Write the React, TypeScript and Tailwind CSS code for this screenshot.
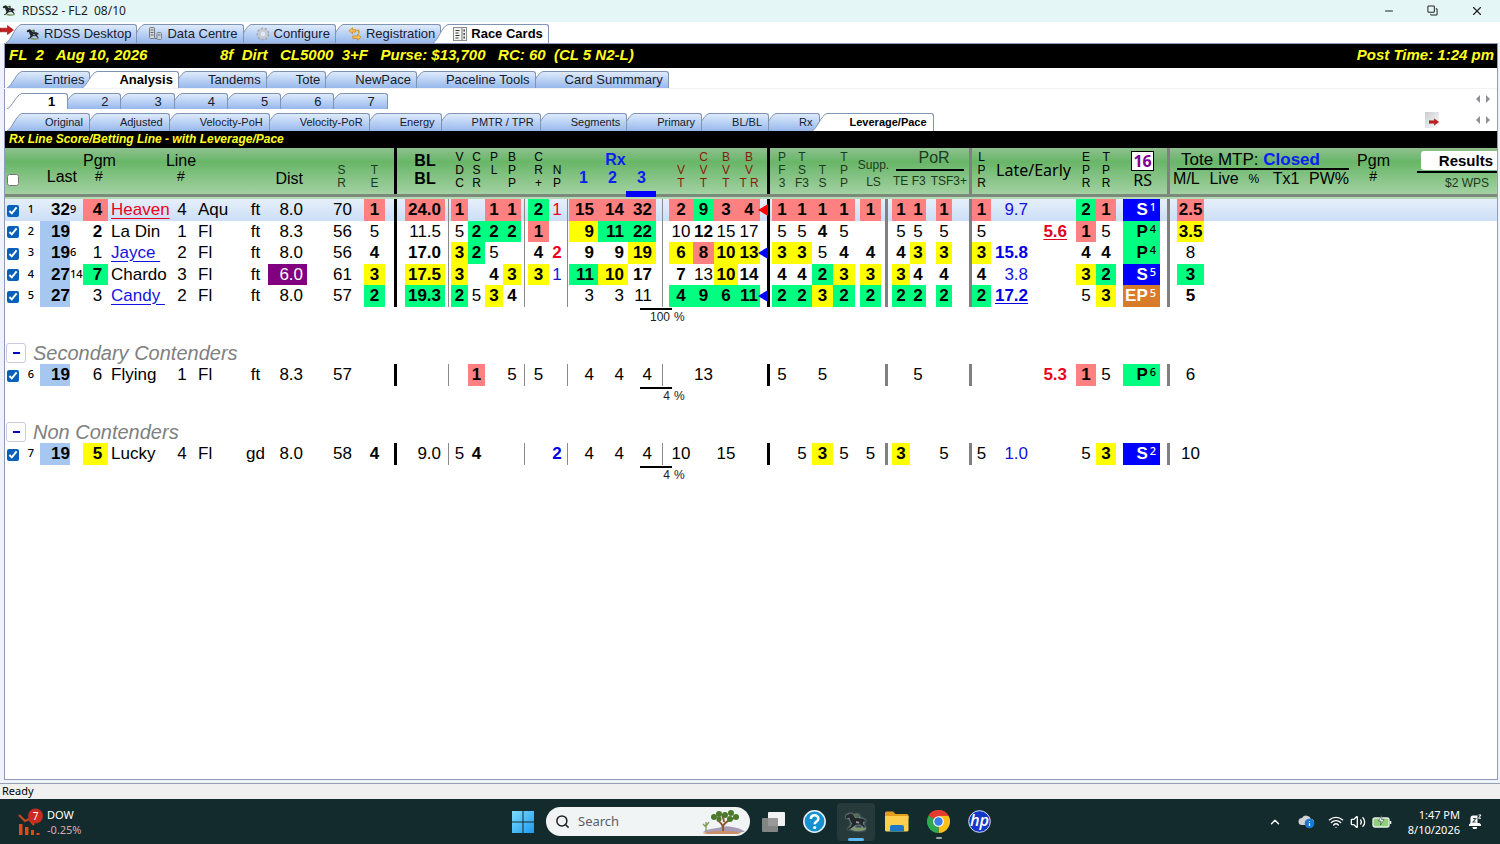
import React from "react";
import { clsx } from "clsx";
import {
  ChevronUp,
  Copy,
  Minus,
  Search,
  Volume2,
  Wifi,
  X,
} from "lucide-react";

type ColKind = "text" | "thin" | "mid" | "thick" | "arrow" | "gap";

interface Column {
  id: string;
  width: number;
  kind: ColKind;
  className?: string;
}

const col = (id: string, width: number, className = "text-center"): Column => ({ id, width, kind: "text", className });
const rule = (kind: ColKind, width: number, id: string): Column => ({ id, width, kind });

const COLUMNS: Column[] = [
  col("check", 17),
  col("idx", 18),
  col("last", 30, "text-right"),
  col("sup", 13),
  col("pgm", 25, "text-center pl-1"),
  col("name", 66, "pl-[3px]"),
  col("line", 16),
  col("track", 53, "pl-2"),
  col("surf", 25),
  col("dist", 39, "text-right pr-1"),
  col("sr", 57, "text-right pr-3"),
  col("te", 21),
  rule("thick", 20, "r1"),
  col("bl", 40, "text-right pr-1"),
  rule("thin", 6, "r2"),
  col("vdc", 17),
  col("csr", 17),
  col("pl", 18),
  col("bpp", 18),
  rule("thin", 7, "r3"),
  col("cr", 21),
  col("np", 16),
  rule("thin", 4, "r4"),
  col("rx1", 29, "text-right pr-1"),
  col("rx2", 30, "text-right pr-1"),
  col("rx3", 28, "text-right pr-1"),
  rule("thin", 13, "r5"),
  col("vt", 24),
  col("cvt", 21),
  col("bvt", 24),
  col("bvtr", 22),
  rule("arrow", 5, "arrow"),
  rule("thick", 7, "r6"),
  col("pf3", 20),
  col("tsf3", 20),
  col("ts", 21),
  col("tpp", 22),
  rule("gap", 5, "g1"),
  col("ls", 21),
  rule("mid", 11, "r7"),
  col("porTe", 18),
  col("porF3", 16),
  rule("gap", 10, "g2"),
  col("porTs", 16),
  rule("gap", 16, "g3"),
  rule("mid", 4, "r8"),
  col("lpr", 19),
  col("late", 39, "text-right pr-[2px]"),
  col("early", 40, "text-right pr-[3px]"),
  rule("gap", 6, "g4"),
  col("epr", 20),
  col("tpr", 20),
  rule("gap", 7, "g5"),
  col("rs", 37, "text-right pr-1"),
  rule("mid", 17, "r9"),
  col("ml", 27),
];

const RULES: Record<string, string> = {
  thin: "bg-[linear-gradient(#8a8a8a,#8a8a8a)] bg-[length:1px_100%] bg-center bg-no-repeat",
  mid: "bg-[linear-gradient(#808080,#808080)] bg-[length:3px_100%] bg-center bg-no-repeat",
  thick: "bg-[linear-gradient(#000,#000)] bg-[length:3px_100%] bg-center bg-no-repeat",
};

// First word of a cell value picks the tone, the second is the value itself.
const TONES: Record<string, string> = {
  r: "bg-[#ff8080] font-bold",
  y: "bg-[#ffff00] font-bold",
  g: "bg-[#00ff80] font-bold",
  b: "font-bold",
  purple: "bg-[#800080] text-white",
  red: "text-[#f00020]",
  redB: "text-[#f00020] font-bold",
  redU: "text-[#e00020] font-bold underline underline-offset-2",
  blue: "text-[#1414e0]",
  blueB: "text-[#0000e6] font-bold",
  blueU: "text-[#0000e6] font-bold underline underline-offset-2",
};

const RS_TONES: Record<string, string> = {
  S: "bg-[#0000ff] text-white",
  P: "bg-[#00ff80] text-black",
  EP: "bg-[#d87c2c] text-white",
};

type Row = Record<string, string>;

const CONTENDERS: Row[] = [
  {
    idx: "1", last: "32", sup: "9", pgm: "r 4", name: "red Heaven", line: "4", track: "Aqu", surf: "ft", dist: "8.0", sr: "70", te: "r 1",
    bl: "r 24.0", vdc: "r 1", pl: "r 1", bpp: "r 1", cr: "g 2", np: "red 1", rx1: "r 15", rx2: "r 14", rx3: "r 32",
    vt: "r 2", cvt: "g 9", bvt: "r 3", bvtr: "r 4", arrow: "#ff0000", pf3: "r 1", tsf3: "r 1", ts: "r 1", tpp: "r 1", ls: "r 1",
    porTe: "r 1", porF3: "r 1", porTs: "r 1", lpr: "r 1", late: "blue 9.7", epr: "g 2", tpr: "r 1", rs: "S 1", ml: "r 2.5",
  },
  {
    idx: "2", last: "19", pgm: "b 2", name: "La Din", line: "1", track: "Fl", surf: "ft", dist: "8.3", sr: "56", te: "5",
    bl: "11.5", vdc: "5", csr: "g 2", pl: "g 2", bpp: "g 2", cr: "r 1", rx1: "y 9", rx2: "g 11", rx3: "g 22",
    vt: "10", cvt: "b 12", bvt: "15", bvtr: "17", pf3: "5", tsf3: "5", ts: "b 4", tpp: "5",
    porTe: "5", porF3: "5", porTs: "5", lpr: "5", early: "redU 5.6", epr: "r 1", tpr: "5", rs: "P 4", ml: "y 3.5",
  },
  {
    idx: "3", last: "19", sup: "6", pgm: "1", name: "blue Jayce", line: "2", track: "Fl", surf: "ft", dist: "8.0", sr: "56", te: "b 4",
    bl: "b 17.0", vdc: "y 3", csr: "g 2", pl: "5", cr: "b 4", np: "redB 2", rx1: "b 9", rx2: "b 9", rx3: "y 19",
    vt: "y 6", cvt: "r 8", bvt: "y 10", bvtr: "y 13", arrow: "#0000ff", pf3: "y 3", tsf3: "y 3", ts: "5", tpp: "b 4", ls: "b 4",
    porTe: "b 4", porF3: "y 3", porTs: "y 3", lpr: "y 3", late: "blueB 15.8", epr: "b 4", tpr: "b 4", rs: "P 4", ml: "8",
  },
  {
    idx: "4", last: "27", sup: "14", pgm: "g 7", name: "Chardo", line: "3", track: "Fl", surf: "ft", dist: "purple 6.0", sr: "61", te: "y 3",
    bl: "y 17.5", vdc: "y 3", pl: "b 4", bpp: "y 3", cr: "y 3", np: "blue 1", rx1: "g 11", rx2: "y 10", rx3: "b 17",
    vt: "b 7", cvt: "13", bvt: "y 10", bvtr: "b 14", pf3: "b 4", tsf3: "b 4", ts: "g 2", tpp: "y 3", ls: "y 3",
    porTe: "y 3", porF3: "b 4", porTs: "b 4", lpr: "b 4", late: "blue 3.8", epr: "y 3", tpr: "g 2", rs: "S 5", ml: "g 3",
  },
  {
    idx: "5", last: "27", pgm: "3", name: "blue Candy", line: "2", track: "Fl", surf: "ft", dist: "8.0", sr: "57", te: "g 2",
    bl: "g 19.3", vdc: "g 2", csr: "5", pl: "y 3", bpp: "b 4", rx1: "3", rx2: "3", rx3: "11",
    vt: "g 4", cvt: "g 9", bvt: "g 6", bvtr: "g 11", arrow: "#0000ff", pf3: "g 2", tsf3: "g 2", ts: "y 3", tpp: "g 2", ls: "g 2",
    porTe: "g 2", porF3: "g 2", porTs: "g 2", lpr: "g 2", late: "blueU 17.2", epr: "5", tpr: "y 3", rs: "EP 5", ml: "b 5",
  },
];

const SECONDARY: Row[] = [
  {
    idx: "6", last: "19", pgm: "6", name: "Flying", line: "1", track: "Fl", surf: "ft", dist: "8.3", sr: "57", csr: "r 1", bpp: "5", cr: "5",
    rx1: "4", rx2: "4", rx3: "4", cvt: "13", pf3: "5", ts: "5", porF3: "5", early: "redB 5.3", epr: "r 1", tpr: "5", rs: "P 6", ml: "6",
  },
];

const NON_CONTENDERS: Row[] = [
  {
    idx: "7", last: "19", pgm: "y 5", name: "Lucky", line: "4", track: "Fl", surf: "gd", dist: "8.0", sr: "58", te: "b 4", bl: "9.0",
    vdc: "5", csr: "b 4", np: "blueB 2", rx1: "4", rx2: "4", rx3: "4", vt: "10", bvt: "15", tsf3: "5", ts: "y 3", tpp: "5", ls: "5",
    porTe: "y 3", porTs: "5", lpr: "5", late: "blue 1.0", epr: "5", tpr: "y 3", rs: "S 2", ml: "10",
  },
];

function parseCell(raw: string) {
  const cut = raw.indexOf(" ");
  const tone = cut > 0 ? TONES[raw.slice(0, cut)] : undefined;
  return tone ? { tone, value: raw.slice(cut + 1) } : { tone: "", value: raw };
}

/* ---------- drawings ---------- */

function HorseIcon({ className }: { className?: string }) {
  return (
    <svg viewBox="0 0 16 14" className={className} aria-hidden="true">
      <path d="M1 2.5 4 1l2 .8L7.5 4l3.8.3c1.2 0 2 .5 2.6 1.2L15.5 7l-2-.5-.8 1.7 1.6 2-.4 1.6-1-.2.3-1.2-2.4-1.6-3.2.3L5.4 11 2.6 12.5l-.4-.8 2-1.4.9-2L4 6 3.4 4 1 4.3z" fill="#23282c" />
      <path d="M6.6 2.2 9 1.4l1.4 1-.4 1.800-2.200-.2z" fill="#4d6b4a" />
      <path d="M6 10.500c2.500 1 5 1 8 .4l1 1c-3 1.500-8 1.300-10.500.2z" fill="#7d9a63" />
      <path d="m8 6.500 2.500.5-.5 1-2-.3z" fill="#9aa3ab" />
    </svg>
  );
}

function DataIcon() {
  return (
    <svg viewBox="0 0 14 14" className="h-[14px] w-[14px]" aria-hidden="true">
      <rect x=".5" y=".5" width="5" height="11" rx="1" fill="#d5d7d9" stroke="#77797c" />
      <path d="M1.500 3h3M1.500 5.500h3M1.500 8h3" stroke="#66696c" />
      <rect x="8" y="5.500" width="4.500" height="7" rx="1" fill="#c6cfda" stroke="#7e8894" />
      <path d="M5.500 11.500H8M9 8h2.500" stroke="#6a737d" />
    </svg>
  );
}

function GearIcon() {
  return (
    <svg viewBox="0 0 14 14" className="h-[14px] w-[14px]" aria-hidden="true">
      <circle cx="7" cy="7" r="5.300" fill="none" stroke="#a5a8ac" strokeWidth="2.200" strokeDasharray="2.300 1.400" />
      <circle cx="7" cy="7" r="3.700" fill="none" stroke="#c9cbd0" strokeWidth="2.400" />
      <circle cx="7" cy="7" r="2.200" fill="#dfeafa" />
    </svg>
  );
}

function SwapIcon() {
  return (
    <svg viewBox="0 0 14 14" className="h-[14px] w-[14px]" aria-hidden="true">
      <path d="M4.500.8 1 3.800l3.500 3V5h3.200V2.600H4.500z" fill="#f6c35a" stroke="#c98a1c" strokeWidth=".8" />
      <path d="m9.500 13.200 3.600-3-3.600-3V9H4.800v2.500h4.700z" fill="#f6c35a" stroke="#c98a1c" strokeWidth=".8" />
      <path d="M8.500 3.500h2.300v3.200" fill="none" stroke="#d79a2c" strokeWidth="1.400" />
    </svg>
  );
}

function CardIcon() {
  return (
    <svg viewBox="0 0 14 14" className="h-[14px] w-[14px]" aria-hidden="true">
      <rect x=".5" y=".5" width="13" height="13" fill="#f4f4f0" stroke="#8a8d90" />
      <path d="M2.500 3.500h4M2.500 6h3M2.500 8.500h4M2.500 11h3" stroke="#33373a" strokeWidth="1.200" />
      <path d="M9 1v12" stroke="#77797c" />
      <path d="M11.200 2.500v2M11.200 6v2M11.200 9.500v2" stroke="#4d5053" strokeWidth="1.600" />
    </svg>
  );
}

function RedArrow({ className }: { className?: string }) {
  return (
    <svg viewBox="0 0 14 10" className={className} aria-hidden="true">
      <path d="M0 3.200h7.500V.5L13.500 5l-6 4.500V6.800H0z" fill="#c61d1d" stroke="#8e1010" strokeWidth=".6" />
    </svg>
  );
}

/* ---------- tabs ---------- */

interface TabItem {
  label: string;
  icon?: React.ReactNode;
}

interface TabStripProps {
  name: string;
  items: TabItem[];
  initial: number;
  className: string;
  tabClass: string;
  labelClass: string;
  children?: React.ReactNode;
}

function TabStrip({ name, items, initial, className, tabClass, labelClass, children }: TabStripProps) {
  const [active, setActive] = React.useState(initial);

  return (
    <div className={clsx("isolate flex items-end", className)}>
      <div role="tablist" aria-label={name} className="flex pl-2">
        {items.map((item, i) => {
          const on = i === active;
          return (
            <button
              key={item.label}
              type="button"
              role="tab"
              aria-selected={on}
              onClick={() => setActive(i)}
              className={clsx("relative -ml-2 flex whitespace-nowrap text-[#16202c] first:ml-0", tabClass)}
              style={{ zIndex: on ? 40 : 20 - i }}
            >
              <svg viewBox="0 0 18 18" preserveAspectRatio="none" className="h-full w-[18px] shrink-0" aria-hidden="true">
                <path d="M0 18C5 16 9 2 15 .5H18V18z" fill={on ? "#fff" : "url(#tab-fill)"} />
                <path d="M0 18C5 16 9 2 15 .5H18" fill="none" stroke="#7f93b2" vectorEffect="non-scaling-stroke" />
              </svg>
              <span
                className={clsx(
                  "flex h-full items-center gap-1 rounded-tr-[3px] border-t border-r border-[#7f93b2]",
                  on ? "bg-white font-bold text-black" : "bg-linear-to-b from-[#dfebfc] to-[#97b8ec]",
                  labelClass,
                )}
              >
                {item.icon}
                {item.label}
              </span>
            </button>
          );
        })}
      </div>
      {children}
    </div>
  );
}

function Pager({ name }: { name: string }) {
  return (
    <div className="flex items-center gap-1 pr-[6px]">
      <button type="button" aria-label={`Previous ${name}`}>
        <svg viewBox="0 0 6 8" className="h-2 w-[6px]"><path d="M5 0v8L1 4z" fill="#8d9096" /></svg>
      </button>
      <button type="button" aria-label={`Next ${name}`}>
        <svg viewBox="0 0 6 8" className="h-2 w-[6px]"><path d="M1 0v8l4-4z" fill="#8d9096" /></svg>
      </button>
    </div>
  );
}

/* ---------- table ---------- */

function Stack({ lines, className }: { lines: [string, string, string]; className?: string }) {
  return (
    <div className={clsx("pt-[3px] text-center text-xs leading-[13px]", className)}>
      {lines.map((line, i) => (
        <div key={i}>{line || "\u00a0"}</div>
      ))}
    </div>
  );
}

function HeaderRow() {
  return (
    <tr className="h-[46px] bg-linear-to-b from-[#8ebf8e] via-[#68b668] via-30% to-[#a3d1a3] align-top whitespace-nowrap *:p-0 *:font-normal">
      <th>
        <input type="checkbox" aria-label="Select all horses" className="mt-[26px] ml-[2px] block h-3 w-3" />
      </th>
      <th colSpan={3} className="text-right">
        <div className="pt-5 pr-[6px] leading-[18px]">Last</div>
      </th>
      <th colSpan={4}>
        <div className="flex gap-[50px] pt-1">
          <div className="w-8 text-center leading-[18px]">
            Pgm
            <div className="text-sm leading-3">#</div>
          </div>
          <div className="w-8 text-center leading-[18px]">
            Line
            <div className="text-sm leading-3">#</div>
          </div>
        </div>
      </th>
      <th colSpan={2} className="text-right">
        <div className="pt-[22px] pr-1 leading-[18px]">Dist</div>
      </th>
      <th><Stack lines={["", "S", "R"]} className="pl-3 text-[#1c3a1c]" /></th>
      <th><Stack lines={["", "T", "E"]} className="text-[#1c3a1c]" /></th>
      <th className={RULES.thick} />
      <th>
        <div className="pt-1 text-center font-bold leading-[18px]">BL<br />BL</div>
      </th>
      <th />
      <th><Stack lines={["V", "D", "C"]} /></th>
      <th><Stack lines={["C", "S", "R"]} /></th>
      <th><Stack lines={["P", "L", ""]} /></th>
      <th><Stack lines={["B", "P", "P"]} /></th>
      <th />
      <th><Stack lines={["C", "R", "+"]} /></th>
      <th><Stack lines={["", "N", "P"]} /></th>
      <th />
      <th colSpan={3} className="relative text-[#0a20f0]">
        <div className="pt-[2px] pl-[6px] text-center font-bold leading-[19px]">Rx</div>
        <div className="grid grid-cols-3 text-center font-bold leading-[18px]">
          <span>1</span>
          <span>2</span>
          <span>3</span>
        </div>
        <div className="absolute right-0 -bottom-[3px] h-[6px] w-[30px] bg-[#0000ff]" />
      </th>
      <th />
      <th><Stack lines={["", "V", "T"]} className="text-[#8b1a0a]" /></th>
      <th><Stack lines={["C", "V", "T"]} className="text-[#8b1a0a]" /></th>
      <th><Stack lines={["B", "V", "T"]} className="text-[#8b1a0a]" /></th>
      <th><Stack lines={["B", "V", "T R"]} className="text-[#8b1a0a]" /></th>
      <th />
      <th className={RULES.thick} />
      <th><Stack lines={["P", "F", "3"]} className="text-[#1c3a1c]" /></th>
      <th><Stack lines={["T", "S", "F3"]} className="text-[#1c3a1c]" /></th>
      <th><Stack lines={["", "T", "S"]} className="text-[#1c3a1c]" /></th>
      <th><Stack lines={["T", "P", "P"]} className="text-[#1c3a1c]" /></th>
      <th colSpan={3}>
        <div className="pt-[10px] text-center text-xs leading-[14px] text-[#1c3a1c]">
          Supp.
          <div className="leading-5">LS</div>
        </div>
      </th>
      <th colSpan={5}>
        <div className="px-1 text-[#1c3a1c]">
          <div className="border-b-2 border-black pt-px pb-[2px] pl-2 text-center text-base leading-[18px]">PoR</div>
          <div className="-mx-[3px] flex justify-between text-xs leading-5">
            <span>TE F3</span>
            <span>TSF3+</span>
          </div>
        </div>
      </th>
      <th className={RULES.mid} />
      <th><Stack lines={["L", "P", "R"]} /></th>
      <th colSpan={3}>
        <div className="pt-[13px] text-center font-['Noto_Sans',sans-serif] text-base leading-[18px]">Late/Early</div>
      </th>
      <th><Stack lines={["E", "P", "R"]} /></th>
      <th><Stack lines={["T", "P", "R"]} /></th>
      <th />
      <th>
        <div className="flex flex-col items-center pt-[3px] pl-[2px] font-['Noto_Sans',sans-serif]">
          <span className="border border-black bg-white px-px text-base font-bold leading-[18px] text-[#800090]">16</span>
          <span className="text-base leading-[19px]">RS</span>
        </div>
      </th>
      <th className={RULES.mid} />
      <th colSpan={2}>
        <div className="-ml-1 flex items-start pt-[3px] text-left">
          <div className="text-[17px]">
            <div className="ml-1 border-b-2 border-black pl-1 leading-[17px]">
              Tote MTP: <b className="text-[#0a20f0]">Closed</b>
            </div>
            <div className="flex w-[176px] items-center justify-between text-base leading-[18px]">
              <span>M/L</span>
              <span>Live</span>
              <span className="text-xs">%</span>
              <span className="pl-1">Tx1</span>
              <span>PW%</span>
            </div>
          </div>
          <div className="ml-2 w-8 pt-px text-center leading-[18px]">
            Pgm
            <div className="text-sm leading-3">#</div>
          </div>
          <div className="ml-auto">
            <div className="border-b-2 border-black pb-px pl-1">
              <button type="button" className="block w-[76px] rounded-l-[3px] bg-white pr-1 text-right text-[15px] font-bold leading-[19px]">
                Results
              </button>
            </div>
            <div className="pr-2 text-right text-xs leading-5 text-[#1c3a1c]">$2 WPS</div>
          </div>
        </div>
      </th>
    </tr>
  );
}

function HorseCell({ column, row }: { column: Column; row: Row }) {
  const raw = row[column.id] ?? "";

  if (column.kind === "arrow") {
    return (
      <td className="relative p-0">
        {raw ? (
          <svg viewBox="0 0 10 12" className="absolute top-[5px] -left-[2px] h-3 w-[10px]" aria-hidden="true">
            <path d="M10 0v12L0 6z" fill={raw} />
          </svg>
        ) : null}
      </td>
    );
  }
  if (column.kind !== "text") return <td className={clsx("p-0", RULES[column.kind])} />;

  if (column.id === "check") {
    return (
      <td className="p-0">
        <input
          type="checkbox"
          defaultChecked
          aria-label={`Include horse ${row.idx}`}
          className="mt-px ml-[2px] block h-3 w-3 accent-[#0860b8]"
        />
      </td>
    );
  }
  if (column.id === "idx" || column.id === "sup") {
    return (
      <td
        className={clsx(
          "p-0 align-top font-['Noto_Sans',sans-serif] text-[11px] font-medium leading-[19px]",
          column.id === "idx" && "text-center",
        )}
      >
        {raw}
      </td>
    );
  }
  if (column.id === "last") {
    return <td className={clsx("p-0 text-right font-bold", row.idx !== "1" && "bg-[#a6c8f0]")}>{raw}</td>;
  }
  if (column.id === "rs") {
    const [style, points] = raw.split(" ");
    return (
      <td className={clsx("p-0 pr-1 text-right font-bold", RS_TONES[style])}>
        {style}
        <span className="relative -top-1 pl-[2px] font-['Noto_Sans',sans-serif] text-[11px] font-medium leading-none">{points}</span>
      </td>
    );
  }

  const { tone, value } = parseCell(raw);
  if (column.id === "name" && tone) {
    return (
      <td className="p-0 pl-[3px]">
        <a href="#" className={clsx("whitespace-pre underline underline-offset-3", tone)}>
          {value.padEnd(6)}
        </a>
      </td>
    );
  }
  return <td className={clsx("p-0", column.className, tone)}>{value}</td>;
}

function Group({ title, rows, percent }: { title?: string; rows: Row[]; percent: string }) {
  const [open, setOpen] = React.useState(true);

  return (
    <tbody>
      {title ? (
        <tr className="h-[23px]">
          <td colSpan={COLUMNS.length + 1} className="p-0">
            <div className="flex items-center gap-[7px]">
              <button
                type="button"
                aria-expanded={open}
                aria-label={`Toggle ${title}`}
                onClick={() => setOpen(!open)}
                className="ml-px flex h-5 w-5 items-center justify-center rounded-[3px] border border-[#c9cbe0] bg-white"
              >
                <span className="h-[2px] w-[7px] bg-[#0000c8]" />
              </button>
              <span className="text-xl leading-[22px] text-[#808080] italic">{title}</span>
            </div>
          </td>
        </tr>
      ) : null}
      {open
        ? rows.map((row, i) => (
            <tr
              key={row.idx}
              className={clsx(
                i % 2 === 0 ? "h-[22px]" : "h-[21px]",
                "leading-[20px]",
                row.idx === "1" && "bg-linear-to-b from-[#e6effa] to-[#cbdff7]",
              )}
            >
              {COLUMNS.map((column) => (
                <HorseCell key={column.id} column={column} row={row} />
              ))}
              <td className="p-0" />
            </tr>
          ))
        : null}
      <tr className="h-[34px] align-top">
        <td colSpan={25} className="p-0" />
        <td colSpan={6} className="p-0">
          <div className="ml-3 flex pt-px text-xs leading-[14px] text-[#222]">
            <span className="w-8 border-t-2 border-black pr-[2px] text-right">{percent}</span>
            <span className="pt-[2px] pl-[2px]">%</span>
          </div>
        </td>
        <td colSpan={COLUMNS.length - 30} className="p-0" />
      </tr>
    </tbody>
  );
}

/* ---------- taskbar ---------- */

function Taskbar() {
  return (
    <footer className="flex h-[45px] items-center bg-[#142b2e] font-['Noto_Sans',sans-serif] text-white">
      <div className="flex flex-1 items-center gap-[3px] pl-[18px]">
        <svg viewBox="0 0 26 28" className="h-7 w-[26px]" aria-hidden="true">
          <path d="M1 7l6 6 4-2 5 6" fill="none" stroke="#c8451f" strokeWidth="2.200" />
          <path d="M1 16h3.500v11H1zM7 19h3.500v8H7zM13 22h3v5h-3zM18.500 25h3v2h-3z" fill="#e0491c" />
          <circle cx="17.500" cy="8" r="7.500" fill="#c92a22" />
          <text x="17.500" y="11.500" textAnchor="middle" fontSize="10" fill="#fff">7</text>
        </svg>
        <div className="text-[11px] leading-[15px]">
          <div>DOW</div>
          <div className="text-[#d6a9b4]">-0.25%</div>
        </div>
      </div>

      <div className="flex items-center pl-3">
        <button type="button" aria-label="Start" className="mr-3">
          <svg viewBox="0 0 22 22" className="block h-[22px] w-[22px]">
            <defs>
              <linearGradient id="win" x1="0" y1="0" x2="1" y2="1">
                <stop offset="0" stopColor="#7fdcfb" />
                <stop offset="1" stopColor="#1a9af2" />
              </linearGradient>
            </defs>
            <path d="M0 0h10.500v10.500H0zM11.500 0H22v10.500H11.500zM0 11.500h10.500V22H0zM11.500 11.500H22V22H11.500z" fill="url(#win)" />
          </svg>
        </button>
        <label className="mr-3 flex h-[29px] w-[204px] items-center overflow-hidden rounded-full bg-[#f1f4f4] pl-[9px]">
          <Search className="h-[15px] w-[15px] shrink-0 text-[#222]" strokeWidth={2.4} />
          <input type="text" aria-label="Search" placeholder="Search" className="ml-2 min-w-0 flex-1 bg-transparent text-[13px] text-black outline-none placeholder:text-[#5a6060]" />
          <svg viewBox="0 0 46 26" className="mr-[3px] h-[26px] w-[46px] shrink-0" aria-hidden="true">
            <path d="M2 23c6-4 12-3 18-5s12 0 16 1 6 2 8 4z" fill="#a79ab8" />
            <path d="M1 24c12-3 30-2 40-1l-4 2H6z" fill="#c98f6a" />
            <path d="M22 22c1-5-1-8-6-11M22 17c2-4 6-6 11-8M23 13c0-3-1-5-2-7" fill="none" stroke="#8a5a33" strokeWidth="2" />
            <g fill="#4c7a2c">
              <circle cx="13" cy="8" r="3" />
              <circle cx="18" cy="5" r="3" />
              <circle cx="24" cy="6" r="3" />
              <circle cx="30" cy="4" r="3" />
              <circle cx="35" cy="8" r="3" />
              <circle cx="29" cy="10" r="3" />
              <circle cx="18" cy="10" r="2.500" />
            </g>
            <path d="M5 22V13M5 18l-3-3M5 17l3-4" stroke="#7b9a55" strokeWidth="1.300" fill="none" />
          </svg>
        </label>
        <button type="button" aria-label="Task view" className="mr-[18px]">
          <svg viewBox="0 0 23 20" className="block h-5 w-[23px]">
            <rect x="6" y="0" width="17" height="14" rx="1" fill="#f2f2f2" />
            <rect x="0" y="6" width="16" height="14" rx="1" fill="#8f8f8f" fillOpacity=".9" />
          </svg>
        </button>
        <button type="button" aria-label="Help" className="mr-[11px]">
          <svg viewBox="0 0 22 22" className="block h-[23px] w-[23px]">
            <circle cx="11" cy="11" r="10.200" fill="#1690cf" stroke="#e4f3fa" strokeWidth="1.500" />
            <path d="M7.500 8.500C7.500 4 14.700 4 14.700 8.300c0 2.800-3.500 2.800-3.500 5.400" fill="none" stroke="#fff" strokeWidth="2.400" />
            <circle cx="11.200" cy="16.700" r="1.500" fill="#fff" />
          </svg>
        </button>
        <button type="button" aria-label="RDSS2" className="mr-[10px] flex h-[38px] w-[38px] flex-col items-center justify-end rounded bg-[#26393b]">
          <HorseIcon className="mb-[6px] h-5 w-6 drop-shadow-[0_0_1px_#cfd8dc]" />
          <span className="h-[3px] w-4 rounded-full bg-[#5cb8ee]" />
        </button>
        <button type="button" aria-label="File Explorer" className="mr-[18px]">
          <svg viewBox="0 0 24 21" className="block h-[21px] w-6">
            <path d="M0 2a1.500 1.500 0 0 1 1.500-1.500H8L10.500 3H22a2 2 0 0 1 1.500 1.500V8H0z" fill="#e0a01c" />
            <path d="M0 5h23.500v14a1.500 1.500 0 0 1-1.500 1.500H1.500A1.500 1.500 0 0 1 0 19z" fill="#fcd04c" />
            <path d="M5 20.500V16a2 2 0 0 1 2-2h10a2 2 0 0 1 2 2v4.500z" fill="#1d78c8" />
          </svg>
        </button>
        <button type="button" aria-label="Chrome" className="mr-[18px] flex flex-col items-center pt-[6px]">
          <svg viewBox="0 0 24 24" className="block h-[23px] w-[23px]">
            <path d="M12 12 1.600 6A12 12 0 0 1 22.400 6z" fill="#e33b2e" />
            <path d="M12 12 22.400 6A12 12 0 0 1 12 24z" fill="#fbc116" />
            <path d="M12 12v12A12 12 0 0 1 1.600 6z" fill="#2da94f" />
            <path d="M12 6h10.400L17 15z" fill="#fbc116" />
            <path d="M1.600 6 7 15l5-9z" fill="#2da94f" />
            <path d="M1.600 6A12 12 0 0 1 22.400 6H12L7 9z" fill="#e33b2e" />
            <circle cx="12" cy="12" r="5.600" fill="#fff" />
            <circle cx="12" cy="12" r="4.400" fill="#3b7ded" />
          </svg>
          <span className="mt-1 h-[2px] w-[6px] rounded-full bg-[#9aa6a8]" />
        </button>
        <button type="button" aria-label="HP" className="mr-[9px]">
          <svg viewBox="0 0 24 24" className="block h-[23px] w-[23px]">
            <circle cx="12" cy="12" r="11.300" fill="#1338c8" stroke="#dfe6fa" strokeWidth="1" />
            <text x="12" y="17" textAnchor="middle" fontSize="17" fontWeight="600" fontStyle="italic" fill="#fff" fontFamily="Open Sans, sans-serif">hp</text>
          </svg>
        </button>
      </div>

      <div className="flex flex-1 items-center justify-end pr-[18px]">
        <ChevronUp className="mr-4 h-[14px] w-[14px]" strokeWidth={2.4} />
        <svg viewBox="0 0 17 15" className="mr-[13px] h-[15px] w-[17px]" aria-hidden="true">
          <path d="M4 11a3.500 3.500 0 0 1 0-7 5 5 0 0 1 9 1 3 3 0 0 1 0 6z" fill="#cfd3d4" />
          <circle cx="11.500" cy="9.500" r="4.800" fill="#1679d3" />
          <path d="M11.500 7v1M11.500 9v3" stroke="#fff" strokeWidth="1.200" />
        </svg>
        <Wifi className="mr-[6px] h-4 w-4" strokeWidth={2} />
        <Volume2 className="mr-[6px] h-4 w-4" strokeWidth={2} />
        <svg viewBox="0 0 20 14" className="mr-4 h-[14px] w-5" aria-hidden="true">
          <rect x="1" y="3" width="16" height="9" rx="2" fill="#8fd07c" stroke="#e8efe8" strokeWidth="1.400" />
          <path d="M18.500 6v3" stroke="#e8efe8" strokeWidth="1.600" />
          <path d="M10 0 6.500 6h2.700L8.500 10 12 4.500H9.500z" fill="#fff" stroke="#142b2e" strokeWidth=".5" />
        </svg>
        <div className="text-right text-[11px] leading-[15px]">
          <div>1:47 PM</div>
          <div>8/10/2026</div>
        </div>
        <svg viewBox="0 0 14 15" className="ml-2 h-[15px] w-[14px]" aria-hidden="true">
          <path d="M1 12V10.500L2.500 9V4C2.500 2.500 3.500 1.500 5 1.500h4.500V9H11.500l1.500 1.500V12z" fill="#fff" />
          <path d="M4.500 13a2.300 2.300 0 0 0 4.600 0z" fill="#fff" />
          <path d="M5 4.500h2.800L5 8h2.800" fill="none" stroke="#3b5356" strokeWidth="1.100" />
          <path d="M10.500 1H13l-2.500 3.200H13" fill="none" stroke="#fff" strokeWidth="1" />
        </svg>
      </div>
    </footer>
  );
}

/* ---------- page ---------- */

const MAIN_TABS: TabItem[] = [
  { label: "RDSS Desktop", icon: <HorseIcon className="h-[13px] w-[14px]" /> },
  { label: "Data Centre", icon: <DataIcon /> },
  { label: "Configure", icon: <GearIcon /> },
  { label: "Registration", icon: <SwapIcon /> },
  { label: "Race Cards", icon: <CardIcon /> },
];

const toTabs = (labels: string[]): TabItem[] => labels.map((label) => ({ label }));

const CARD_TABS = toTabs(["Entries", "Analysis", "Tandems", "Tote", "NewPace", "Paceline Tools", "Card Summmary"]);
const RACE_TABS = toTabs(["1", "2", "3", "4", "5", "6", "7"]);
const VIEW_TABS = toTabs([
  "Original", "Adjusted", "Velocity-PoH", "Velocity-PoR", "Energy", "PMTR / TPR", "Segments", "Primary", "BL/BL", "Rx", "Leverage/Pace",
]);

export default function App() {
  return (
    <div className="flex min-h-screen flex-col bg-[#eef3fb] font-['Liberation_Sans',Arial,sans-serif] text-black">
      <svg className="absolute h-0 w-0" aria-hidden="true">
        <defs>
          <linearGradient id="tab-fill" x1="0" y1="0" x2="0" y2="1">
            <stop offset="0" stopColor="#dfebfc" />
            <stop offset="1" stopColor="#97b8ec" />
          </linearGradient>
        </defs>
      </svg>

      <header className="flex h-[22px] items-center bg-[#e4f6f6] pr-4 pb-px pl-[2px] font-['Noto_Sans',sans-serif] text-xs text-[#222]">
        <HorseIcon className="mr-[6px] h-[13px] w-[14px]" />
        <span className="whitespace-pre">RDSS2 - FL2  08/10</span>
        <div className="ml-auto flex items-center gap-8 text-[#222]">
          <button type="button" aria-label="Minimize"><Minus className="h-3 w-3" strokeWidth={2} /></button>
          <button type="button" aria-label="Restore"><Copy className="h-[11px] w-[11px] -scale-x-100 rotate-90" strokeWidth={2.2} /></button>
          <button type="button" aria-label="Close"><X className="h-[14px] w-[14px]" strokeWidth={2} /></button>
        </div>
      </header>

      <div className="flex h-[21px] bg-white">
        <RedArrow className="mt-[3px] -mr-2 h-[10px] w-[14px] shrink-0" />
        <TabStrip
          name="Modules"
          items={MAIN_TABS}
          initial={4}
          className="-ml-2"
          tabClass="h-[19px] text-[13px]"
          labelClass="pl-[2px] pr-[5px]"
        />
      </div>

      <main className="mr-[2px] ml-1 flex flex-1 flex-col border border-[#8f9bb8] bg-white">
        <div className="flex h-6 items-center bg-black pr-[3px] pb-px pl-1 text-[15px] font-bold whitespace-pre text-[#ffff20] italic">
          <span className="w-[211px]">FL  2   Aug 10, 2026</span>
          <span>8f  Dirt   CL5000  3+F   Purse: $13,700   RC: 60  (CL 5 N2-L)</span>
          <span className="ml-auto">Post Time: 1:24 pm</span>
        </div>

        <TabStrip
          name="Card views"
          items={CARD_TABS}
          initial={1}
          className="-ml-[6px] h-[21px] border-b border-[#f0f2f4]"
          tabClass="h-[17px] text-[13px]"
          labelClass="pl-[19px] pr-[5px]"
        />
        <TabStrip
          name="Races"
          items={RACE_TABS}
          initial={0}
          className="-ml-[6px] h-5"
          tabClass="h-4 text-[13px]"
          labelClass="pl-[23px] pr-3"
        >
          <div className="ml-auto self-center">
            <Pager name="race" />
          </div>
        </TabStrip>
        <TabStrip
          name="Analysis views"
          items={VIEW_TABS}
          initial={10}
          className="-ml-[6px] h-[22px]"
          tabClass="h-[18px] text-[11px]"
          labelClass="pl-5 pr-[6px]"
        >
          <div className="ml-auto flex items-center gap-9 self-center">
            <button type="button" aria-label="Export" className="relative h-4 w-[14px] bg-linear-to-br from-[#c9cbd0] to-white">
              <RedArrow className="absolute top-[6px] left-1 h-2 w-[10px]" />
            </button>
            <Pager name="view" />
          </div>
        </TabStrip>

        <h1 className="h-[17px] bg-black pl-1 text-xs leading-4 font-bold text-[#ffff20] italic">
          Rx Line Score/Betting Line - with Leverage/Pace
        </h1>

        <table className="w-full table-fixed border-collapse text-[17px] whitespace-nowrap">
          <colgroup>
            {COLUMNS.map((column) => (
              <col key={column.id} style={{ width: column.width }} />
            ))}
            <col />
          </colgroup>
          <thead className="text-base">
            <HeaderRow />
            <tr>
              <td colSpan={COLUMNS.length + 1} className="h-[5px] bg-linear-to-b from-[#7b8a7b] from-60% to-[#b5dab5] to-60% p-0" />
            </tr>
          </thead>
          <Group rows={CONTENDERS} percent="100" />
          <Group title="Secondary Contenders" rows={SECONDARY} percent="4" />
          <Group title="Non Contenders" rows={NON_CONTENDERS} percent="4" />
        </table>
      </main>

      <div className="mt-[3px] h-4 border-t border-[#9a9fae] bg-[#f0f0f0] pl-[2px] font-['Noto_Sans',sans-serif] text-[11px] leading-[14px]">
        Ready
      </div>
      <Taskbar />
    </div>
  );
}
